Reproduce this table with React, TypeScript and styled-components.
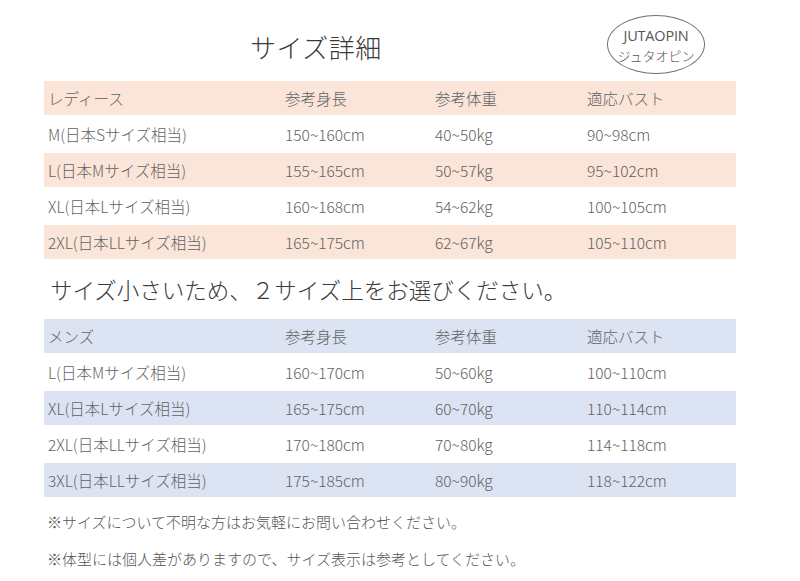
import React from "react";
import styled, { createGlobalStyle } from "styled-components";

const Global = createGlobalStyle`
  html, body { margin: 0; padding: 0; background: #ffffff; }
  body { font-family: "Noto Sans CJK JP", "Noto Sans", sans-serif; }
`;

const Page = styled.div`
  width: 800px;
  height: 581px;
  box-sizing: border-box;
  padding: 0 64px 0 44px;
  display: flex;
  flex-direction: column;
  overflow: hidden;
`;

const Header = styled.div`
  height: 80px;
  display: flex;
  align-items: flex-start;
`;

const Title = styled.h1`
  margin: 31px 0 0 206px;
  font-size: 26px;
  line-height: 32px;
  font-weight: 300;
  color: #3a3a3a;
  letter-spacing: 0.5px;
`;

const Logo = styled.div`
  margin: 15px 31px 0 auto;
  width: 96px;
  height: 57px;
  border: 1.5px solid #707070;
  border-radius: 50%;
  display: flex;
  flex-direction: column;
  align-items: center;
  justify-content: center;
  color: #555;
`;

const LogoLatin = styled.span`
  display: block;
  height: 21px;
  line-height: 21px;
  font-family: "Open Sans", "Noto Sans", sans-serif;
  font-size: 14.5px;
  font-weight: 400;
  letter-spacing: -0.2px;
`;

const LogoKana = styled.span`
  display: block;
  height: 19px;
  line-height: 19px;
  font-size: 13px;
  font-weight: 300;
`;

const Table = styled.div`
  display: flex;
  flex-direction: column;
  width: 692px;
`;

const Row = styled.div<{ $band?: string }>`
  height: 36px;
  display: grid;
  grid-template-columns: 237px 150px 152px 1fr;
  align-items: center;
  padding-left: 4px;
  background: ${(p) => p.$band ?? "transparent"};
  font-size: 15.5px;
  font-weight: 300;
  color: #626262;
  border-top: 1px solid #fff;
  border-bottom: 1px solid #fff;
  box-sizing: border-box;
`;

const Cell = styled.span`
  white-space: nowrap;
`;

const Notice = styled.p`
  margin: 0;
  height: 58px;
  display: flex;
  align-items: center;
  padding-left: 6px;
  font-size: 22.5px;
  font-weight: 300;
  color: #3a3a3a;
  white-space: nowrap;
`;

const Footnotes = styled.div`
  display: flex;
  flex-direction: column;
  padding-top: 13px;
  gap: 15px;
`;

const Footnote = styled.p`
  margin: 0;
  height: 22px;
  line-height: 22px;
  padding-left: 3px;
  font-size: 15px;
  font-weight: 300;
  color: #555;
  white-space: nowrap;
`;

type RowData = [string, string, string, string];

const ladies: RowData[] = [
  ["レディース", "参考身長", "参考体重", "適応バスト"],
  ["M(日本Sサイズ相当)", "150~160cm", "40~50kg", "90~98cm"],
  ["L(日本Mサイズ相当)", "155~165cm", "50~57kg", "95~102cm"],
  ["XL(日本Lサイズ相当)", "160~168cm", "54~62kg", "100~105cm"],
  ["2XL(日本LLサイズ相当)", "165~175cm", "62~67kg", "105~110cm"],
];

const mens: RowData[] = [
  ["メンズ", "参考身長", "参考体重", "適応バスト"],
  ["L(日本Mサイズ相当)", "160~170cm", "50~60kg", "100~110cm"],
  ["XL(日本Lサイズ相当)", "165~175cm", "60~70kg", "110~114cm"],
  ["2XL(日本LLサイズ相当)", "170~180cm", "70~80kg", "114~118cm"],
  ["3XL(日本LLサイズ相当)", "175~185cm", "80~90kg", "118~122cm"],
];

function SizeTable({ rows, band }: { rows: RowData[]; band: string }) {
  return (
    <Table>
      {rows.map((r, i) => (
        <Row key={i} $band={i % 2 === 0 ? band : undefined}>
          {r.map((c, j) => (
            <Cell key={j}>{c}</Cell>
          ))}
        </Row>
      ))}
    </Table>
  );
}

export default function App() {
  return (
    <>
      <Global />
      <Page>
        <Header>
          <Title>サイズ詳細</Title>
          <Logo>
            <LogoLatin>JUTAOPIN</LogoLatin>
            <LogoKana>ジュタオピン</LogoKana>
          </Logo>
        </Header>
        <SizeTable rows={ladies} band="#fbe4d8" />
        <Notice>サイズ小さいため、２サイズ上をお選びください。</Notice>
        <SizeTable rows={mens} band="#dce4f4" />
        <Footnotes>
          <Footnote>※サイズについて不明な方はお気軽にお問い合わせください。</Footnote>
          <Footnote>※体型には個人差がありますので、サイズ表示は参考としてください。</Footnote>
        </Footnotes>
      </Page>
    </>
  );
}
